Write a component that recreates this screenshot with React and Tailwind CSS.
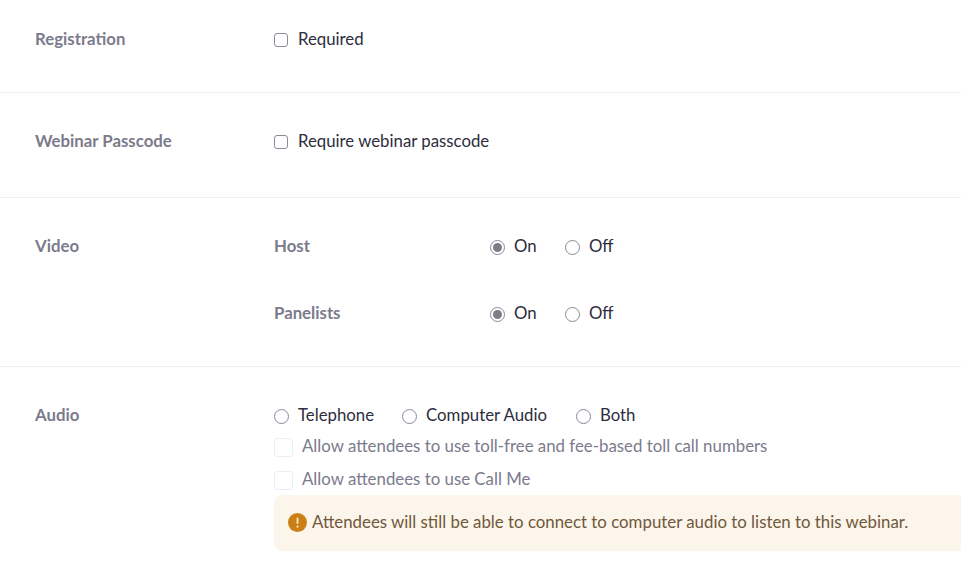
import React from 'react';

const Checkbox = ({ label, disabled }) => (
  <label className={`flex items-center ${disabled ? 'text-[#7b7b8c] text-[16.83px]' : 'text-[#2d2d3d]'}`}>
    <span
      className={`block rounded-[3px] border bg-white translate-y-px ${
        disabled ? 'w-[19px] h-[19px] border-[#ededf4] mr-[9px]' : 'w-[14px] h-[14px] border-[#8a8a98] mr-[10px]'
      }`}
    />
    {label}
  </label>
);

const Radio = ({ label, checked, className }) => (
  <label className={`flex items-center text-[#2d2d3d] ${className || ''}`}>
    <span className="flex items-center justify-center w-[15px] h-[15px] rounded-full border border-[#8a8a98] bg-white mr-[9px] translate-y-px">
      {checked && <span className="block w-[9px] h-[9px] rounded-full bg-[#7d7d8a]" />}
    </span>
    {label}
  </label>
);

const Label = ({ children, className }) => (
  <div className={`font-bold text-[#7b7b8c] ${className || ''}`}>{children}</div>
);

const OnOff = ({ title }) => (
  <div className="flex">
    <Label className="w-[216px]">{title}</Label>
    <Radio label="On" checked className="w-[75px]" />
    <Radio label="Off" />
  </div>
);

const App = () => {
  return (
    <div className="w-[961px] h-[584px] overflow-hidden bg-white text-[16.8px] leading-[22px] font-['Lato',sans-serif]">
      <div className="flex pl-[35px] pt-[28px] pb-[42px] border-b border-[#ededf4]">
        <Label className="w-[239px]">Registration</Label>
        <Checkbox label="Required" />
      </div>

      <div className="flex pl-[35px] pt-[37px] pb-[45px] border-b border-[#ededf4]">
        <Label className="w-[239px]">Webinar Passcode</Label>
        <Checkbox label="Require webinar passcode" />
      </div>

      <div className="flex pl-[35px] pt-[37px] pb-[42px] border-b border-[#ededf4]">
        <Label className="w-[239px]">Video</Label>
        <div className="flex flex-col gap-[45px]">
          <OnOff title="Host" />
          <OnOff title="Panelists" />
        </div>
      </div>

      <div className="flex pl-[35px] pt-[37px]">
        <Label className="w-[239px] shrink-0">Audio</Label>
        <div className="flex-1 mr-[-20px]">
          <div className="flex">
            <Radio label="Telephone" className="mr-[28px]" />
            <Radio label="Computer Audio" className="mr-[29px]" />
            <Radio label="Both" />
          </div>
          <div className="mt-[9px]">
            <Checkbox label="Allow attendees to use toll-free and fee-based toll call numbers" disabled />
          </div>
          <div className="mt-[11px]">
            <Checkbox label="Allow attendees to use Call Me" disabled />
          </div>
          <div className="flex items-center mt-[5px] h-[56px] pl-[14px] pb-[3px] rounded-[8px] bg-[#fcf5ec] text-[#70583a] text-[16.84px]">
            <svg className="w-[19px] h-[19px] mr-[5px] shrink-0 translate-y-px" viewBox="0 0 19 19">
              <circle cx="9.5" cy="9.5" r="9.5" fill="#cb7f14" />
              <rect x="8.6" y="4.5" width="1.8" height="6.5" rx="0.9" fill="#fbe9cf" />
              <circle cx="9.5" cy="13.6" r="1.1" fill="#fbe9cf" />
            </svg>
            Attendees will still be able to connect to computer audio to listen to this webinar.
          </div>
        </div>
      </div>
    </div>
  );
};

export default App;
